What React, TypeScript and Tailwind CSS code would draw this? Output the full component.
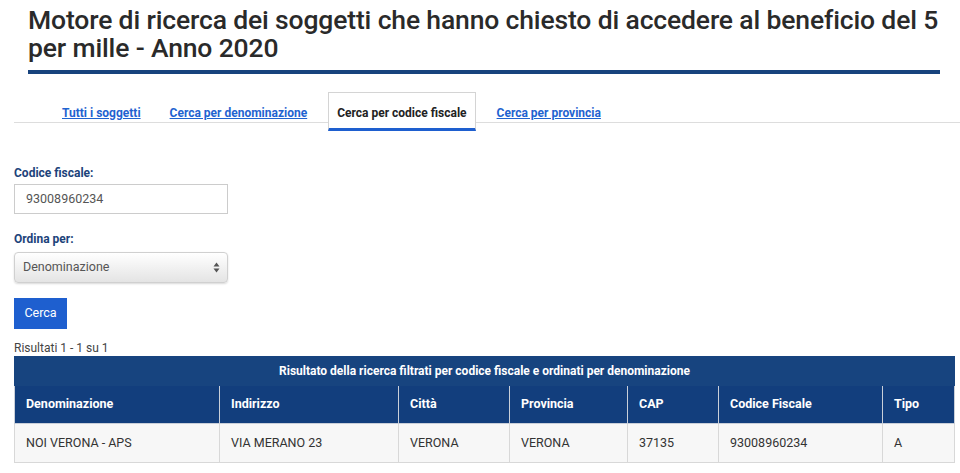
import React from "react";

const tabs = [
  { label: "Tutti i soggetti", active: false },
  { label: "Cerca per denominazione", active: false },
  { label: "Cerca per codice fiscale", active: true },
  { label: "Cerca per provincia", active: false },
];

const columns = [
  { title: "Denominazione", w: "w-[205px]" },
  { title: "Indirizzo", w: "w-[179px]" },
  { title: "Città", w: "w-[111px]" },
  { title: "Provincia", w: "w-[118px]" },
  { title: "CAP", w: "w-[91px]" },
  { title: "Codice Fiscale", w: "w-[164px]" },
  { title: "Tipo", w: "w-[72px]" },
];

const row = ["NOI VERONA - APS", "VIA MERANO 23", "VERONA", "VERONA", "37135", "93008960234", "A"];

const App = () => {
  return (
    <div className="min-h-screen bg-white font-['Roboto',sans-serif] text-[#333]">
      <div className="pl-[28px] pr-[12px] pt-[6px]">
        <h1 className="text-[26.5px] leading-[28px] font-medium text-[#2a2a2a] tracking-[-0.15px]">
          Motore di ricerca dei soggetti che hanno chiesto di accedere al beneficio del 5 per mille - Anno 2020
        </h1>
        <div className="mt-[8px] h-[4px] w-[912px] bg-[#17437d]" />
      </div>

      <div className="mt-[18px] ml-[14px] h-[31px] border-b border-[#ddd] flex items-start pl-[40px] gap-[13px]">
        {tabs.map((t) =>
          t.active ? (
            <div
              key={t.label}
              className="h-[39px] px-[8px] pt-[11px] bg-white border border-[#d4d4d4] border-b-[3px] border-b-[#1e5fcf] text-[12px] font-bold text-[#222]"
            >
              {t.label}
            </div>
          ) : (
            <a
              key={t.label}
              href="#"
              className="h-[31px] px-[8px] pt-[12px] text-[12px] font-bold text-[#1f63d0] underline"
            >
              {t.label}
            </a>
          )
        )}
      </div>

      <div className="pl-[14px] pt-[42px]">
        <label className="block text-[12px] font-bold text-[#1c437a] leading-[16px]">Codice fiscale:</label>
        <div className="mt-[3px] w-[214px] h-[30px] border border-[#ccc] flex items-center pl-[11px] text-[12.5px] text-[#555]">
          93008960234
        </div>
        <label className="block mt-[17px] text-[12px] font-bold text-[#1c437a] leading-[16px]">Ordina per:</label>
        <div className="mt-[5px] w-[214px] h-[31px] border border-[#d0d0d0] rounded-[4px] bg-gradient-to-b from-white to-[#e4e4e4] shadow-[0_1px_2px_rgba(0,0,0,0.15)] flex items-center justify-between pl-[8px] pr-[7px] text-[12.5px] text-[#555]">
          <span>Denominazione</span>
          <svg width="7" height="11" viewBox="0 0 7 11">
            <path d="M3.5 0.5 L6.5 4.5 L0.5 4.5 Z" fill="#555" />
            <path d="M3.5 10.5 L6.5 6.5 L0.5 6.5 Z" fill="#555" />
          </svg>
        </div>
        <button className="mt-[15px] w-[53px] h-[31px] bg-[#1e5fcf] text-white text-[12.5px]">Cerca</button>
        <div className="mt-[12px] text-[12px] leading-[14px] text-[#444]">Risultati 1 - 1 su 1</div>
      </div>

      <table className="ml-[14px] mt-[1px] w-[940px] border-collapse text-[12.5px] table-fixed">
        <colgroup>
          {columns.map((c) => (
            <col key={c.title} className={c.w} />
          ))}
        </colgroup>
        <thead>
          <tr>
            <th colSpan={7} className="h-[29px] bg-[#17447f] text-white text-[12px] font-bold text-center border border-[#17447f]">
              Risultato della ricerca filtrati per codice fiscale e ordinati per denominazione
            </th>
          </tr>
          <tr>
            {columns.map((c) => (
              <th
                key={c.title}
                className="h-[38px] bg-[#123e7d] text-white font-bold text-left pl-[11px] border border-[#c9cfd9]"
              >
                {c.title}
              </th>
            ))}
          </tr>
        </thead>
        <tbody>
          <tr>
            {row.map((v, i) => (
              <td key={i} className="h-[39px] bg-[#f7f7f7] text-[#333] pl-[11px] border border-[#d8d8d8]">
                {v}
              </td>
            ))}
          </tr>
        </tbody>
      </table>
    </div>
  );
};

export default App;
